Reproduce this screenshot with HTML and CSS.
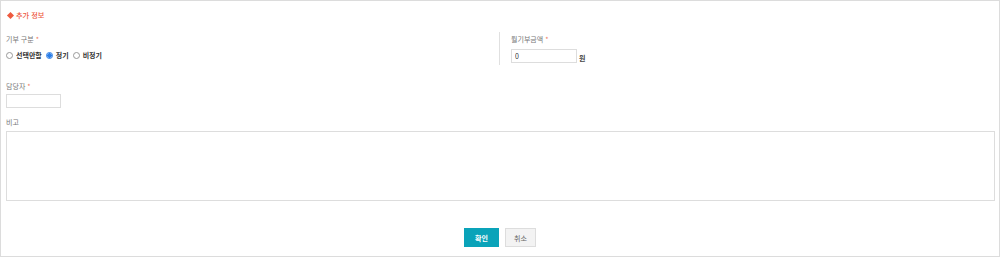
FILE: index.html
```html
<!DOCTYPE html>
<html lang="ko">
<head>
<meta charset="utf-8">
<link rel="stylesheet" href="styles.css">
</head>
<body>
<div class="panel">
  <div class="title"><span class="diamond"></span>추가 정보</div>
  <div class="row">
    <div class="col left">
      <div class="label">기부 구분 <span class="req">*</span></div>
      <div class="radios">
        <label class="radio"><span class="dot"></span>선택안함</label>
        <label class="radio"><span class="dot on"></span>정기</label>
        <label class="radio"><span class="dot"></span>비정기</label>
      </div>
    </div>
    <div class="col right">
      <div class="label">월기부금액 <span class="req">*</span></div>
      <div class="amount"><input class="input amt" type="text" value="0"><span class="won">원</span></div>
    </div>
  </div>
  <div class="field">
    <div class="label">담당자 <span class="req">*</span></div>
    <input class="input mgr" type="text">
  </div>
  <div class="field">
    <div class="label">비고</div>
    <textarea class="memo"></textarea>
  </div>
  <div class="buttons">
    <button class="btn ok">확인</button>
    <button class="btn cancel">취소</button>
  </div>
</div>
</body>
</html>
```
FILE: styles.css
```css
* { box-sizing: border-box; }
html, body { margin: 0; padding: 0; background: #fff; }
body { font-family: "Noto Sans CJK KR", "Noto Sans", sans-serif; font-size: 7px; color: #555; }
.panel { width: 1000px; height: 257px; border: 1px solid #dcdcdc; padding: 0 5px; }
.title { display: flex; align-items: center; height: 28px; color: #ee5a3f; font-size: 7.2px; font-weight: 500; }
.diamond { width: 5px; height: 5px; background: #ee5a3f; transform: rotate(45deg); margin: 0 3px 0 2px; }
.row { display: flex; }
.col.left { width: 494px; border-right: 1px solid #e0e0e0; height: 33px; margin-top: 3px; padding-top: 2px; }
.col.right { padding-left: 11px; margin-top: 3px; padding-top: 2px; }
.label { color: #777; font-size: 7px; line-height: 10px; height: 10px; }
.req { color: #f07a5a; }
.radios { display: flex; align-items: center; margin-top: 6px; height: 10px; }
.radio { display: flex; align-items: center; color: #333; font-size: 7px; font-weight: 700; margin-right: 4px; }
.dot { width: 7px; height: 7px; border: 1px solid #999; border-radius: 50%; margin-right: 3px; background: #fff; }
.dot.on { border-color: #2a7ee8; background: radial-gradient(circle, #2a7ee8 0 2px, #fff 2.5px); }
.amount { display: flex; align-items: flex-end; margin-top: 5px; }
.input { border: 1px solid #ddd; height: 14px; font-size: 7px; padding: 0 3px; font-family: inherit; color: #333; outline: none; }
.amt { width: 66px; }
.won { margin-left: 2px; color: #444; font-size: 7px; font-weight: 700; line-height: 9px; }
.field { margin-top: 16px; }
.field + .field { margin-top: 9px; }
.mgr { width: 55px; margin-top: 3px; display: block; }
.memo { display: block; width: 989px; height: 70px; border: 1px solid #ddd; margin-top: 4px; resize: none; outline: none; }
.buttons { display: flex; justify-content: center; gap: 6px; margin-top: 27px; }
.btn { height: 19px; font-family: inherit; font-size: 7px; border-radius: 0; padding: 0; cursor: pointer; }
.ok { width: 35px; background: #0aa3b9; color: #fff; border: 1px solid #0aa3b9; font-weight: 700; }
.cancel { width: 31px; background: #f3f3f3; color: #666; border: 1px solid #ddd; }
```
